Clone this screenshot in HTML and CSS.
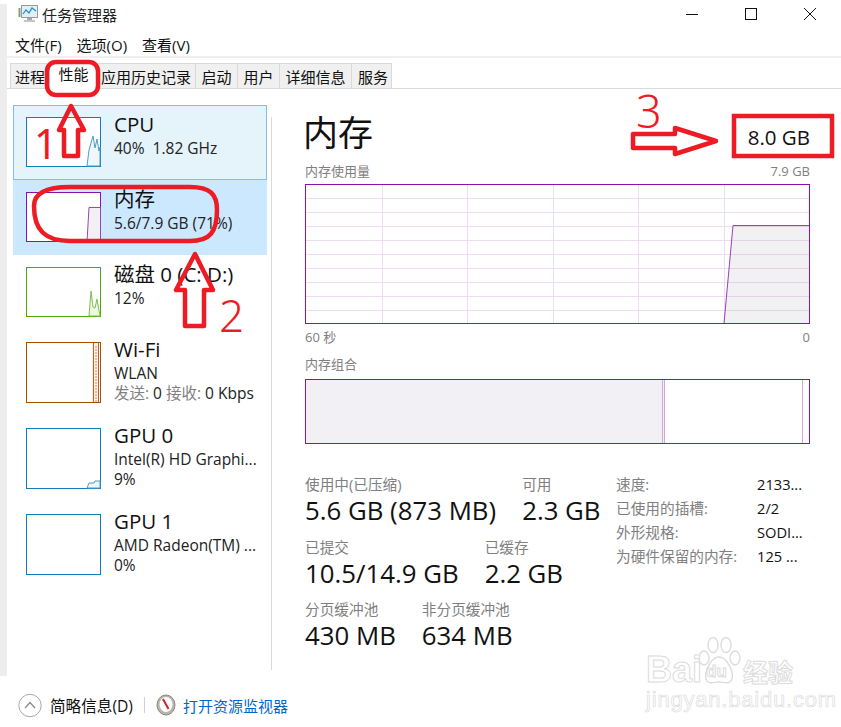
FILE: index.html
```html
<!DOCTYPE html>
<html lang="zh-CN">
<head>
<meta charset="utf-8">
<title>任务管理器</title>
<link rel="stylesheet" href="styles.css">
</head>
<body>
<div class="page">
  <header class="titlebar">
    <svg class="app-icon" width="20" height="18" viewBox="0 0 20 18"><rect x="0.5" y="3" width="2" height="9" fill="#7f9f7f"/><rect x="3.5" y="0.5" width="16" height="12" fill="#dff0fa" stroke="#9a9a9a"/><path d="M5 9 L8 5 L11 8 L14 3 L18 6" fill="none" stroke="#2c8ac9" stroke-width="1.2"/><rect x="9" y="13" width="5" height="2" fill="#a8a8a8"/><rect x="6" y="15" width="11" height="2" fill="#c4c4c4"/></svg>
    <span class="app-title">任务管理器</span>
    <div class="controls">
      <svg width="14" height="14" viewBox="0 0 14 14"><path d="M1 7.5H13" stroke="#111" stroke-width="1"/></svg>
      <svg width="14" height="14" viewBox="0 0 14 14"><rect x="1.5" y="1.5" width="11" height="11" fill="none" stroke="#111"/></svg>
      <svg width="14" height="14" viewBox="0 0 14 14"><path d="M1 1L13 13M13 1L1 13" stroke="#111" stroke-width="1"/></svg>
    </div>
  </header>
  <nav class="menubar"><span>文件(F)</span><span>选项(O)</span><span>查看(V)</span></nav>
  <div class="tabs">
    <span class="tab t1">进程</span><span class="tab active t2">性能</span><span class="tab t3">应用历史记录</span><span class="tab t4">启动</span><span class="tab t4">用户</span><span class="tab t5">详细信息</span><span class="tab t6">服务</span>
  </div>
  <div class="content">
    <aside class="list">
      <div class="item cpu">
        <svg class="thumb" width="75" height="50" viewBox="0 0 75 50"><rect x="0.5" y="0.5" width="74" height="49" fill="#fff" stroke="#117dbb"/><path d="M61 49 L63 33 L65 26 L67 19 L69 31 L71 22 L73 34 L74 30 V49Z" fill="#f0f7fb" stroke="#4f9ccb"/></svg>
        <div class="info"><div class="name">CPU</div><div class="sub">40%&nbsp; 1.82 GHz</div></div>
      </div>
      <div class="item selected">
        <svg class="thumb" width="75" height="50" viewBox="0 0 75 50"><rect x="0.5" y="0.5" width="74" height="49" fill="#fff" stroke="#8b12ae"/><path d="M61 49.5 L63 15.5 H74.5 V49.5Z" fill="#f2f0f4" stroke="#9c44b8"/></svg>
        <div class="info"><div class="name">内存</div><div class="sub">5.6/7.9 GB (71%)</div></div>
      </div>
      <div class="item">
        <svg class="thumb" width="75" height="50" viewBox="0 0 75 50"><rect x="0.5" y="0.5" width="74" height="49" fill="#fff" stroke="#4da60c"/><path d="M63 49 L65 24 L67 40 L69 41 L71 32 L73 44 L74 48 V49Z" fill="#eef7e6" stroke="#7cc04c"/></svg>
        <div class="info"><div class="name">磁盘 0 (C: D:)</div><div class="sub">12%</div></div>
      </div>
      <div class="item tall">
        <svg class="thumb" width="75" height="61" viewBox="0 0 75 61"><rect x="0.5" y="0.5" width="74" height="60" fill="#fff" stroke="#a74f01"/><path d="M66 60 V1 H73 V60Z" fill="#fbeee4"/><path d="M67.5 60 V1 M72.5 60 V1" fill="none" stroke="#b5652a"/><path d="M70 60 V4" fill="none" stroke="#e08a5c" stroke-dasharray="2 1"/></svg>
        <div class="info"><div class="name">Wi-Fi</div><div class="sub">WLAN</div><div class="sub third"><span class="muted">发送:</span> 0 <span class="muted">接收:</span> 0 Kbps</div></div>
      </div>
      <div class="item tall">
        <svg class="thumb" width="75" height="61" viewBox="0 0 75 61"><rect x="0.5" y="0.5" width="74" height="60" fill="#fff" stroke="#117dbb"/><path d="M61 60 L63 55 H68 L69 53 H74 V60Z" fill="#f0f7fb" stroke="#4f9ccb"/></svg>
        <div class="info"><div class="name">GPU 0</div><div class="sub">Intel(R) HD Graphi...</div><div class="sub third">9%</div></div>
      </div>
      <div class="item tall">
        <svg class="thumb" width="75" height="61" viewBox="0 0 75 61"><rect x="0.5" y="0.5" width="74" height="60" fill="#fff" stroke="#117dbb"/></svg>
        <div class="info"><div class="name">GPU 1</div><div class="sub">AMD Radeon(TM) ...</div><div class="sub third">0%</div></div>
      </div>
    </aside>
    <div class="divider"></div>
    <main class="detail">
      <div class="head"><h1>内存</h1><div class="capacity">8.0 GB</div></div>
      <div class="caption"><span>内存使用量</span><span>7.9 GB</span></div>
      <svg class="graph" width="505" height="140" viewBox="0 0 505 140">
        <g stroke="#eedcf3" stroke-width="1">
          <path d="M77.5 0V140M162.5 0V140M248.5 0V140M333.5 0V140M419.5 0V140"/>
          <path d="M0 14.5H505M0 28.5H505M0 42.5H505M0 56.5H505M0 70.5H505M0 84.5H505M0 98.5H505M0 112.5H505M0 126.5H505"/>
        </g>
        <path d="M419 139.5 L428 41.5 H504.5 V139.5Z" fill="#8e8296" fill-opacity=".12" stroke="none"/>
        <path d="M419 139.5 L428 41.5 H504" fill="none" stroke="#9b3fb8"/>
        <rect x="0.5" y="0.5" width="504" height="139" fill="none" stroke="#8b12ae"/>
      </svg>
      <div class="caption axis"><span>60 秒</span><span>0</span></div>
      <div class="caption combo">内存组合</div>
      <div class="composition"><div class="used"></div><div class="sep"></div><div class="free"></div><div class="sep"></div><div class="rest"></div></div>
      <section class="stats">
        <div class="stat-rows">
          <div class="stat-row"><div class="stat"><label>使用中(已压缩)</label><strong>5.6 GB (873 MB)</strong></div><div class="stat"><label>可用</label><strong>2.3 GB</strong></div></div>
          <div class="stat-row"><div class="stat"><label>已提交</label><strong>10.5/14.9 GB</strong></div><div class="stat"><label>已缓存</label><strong>2.2 GB</strong></div></div>
          <div class="stat-row"><div class="stat"><label>分页缓冲池</label><strong>430 MB</strong></div><div class="stat"><label>非分页缓冲池</label><strong>634 MB</strong></div></div>
        </div>
        <dl class="props">
          <dt>速度:</dt><dd>2133...</dd>
          <dt>已使用的插槽:</dt><dd>2/2</dd>
          <dt>外形规格:</dt><dd>SODI...</dd>
          <dt>为硬件保留的内存:</dt><dd>125 ...</dd>
        </dl>
      </section>
    </main>
  </div>
  <footer class="footer">
    <svg width="24" height="25" viewBox="0 0 24 25"><circle cx="12" cy="12.5" r="11.2" fill="#fff" stroke="#a6a6a6"/><path d="M7 15L12 9.5L17 15" fill="none" stroke="#8a8a8a" stroke-width="1.3"/></svg>
    <span class="brief">简略信息(D)</span>
    <span class="vsep"></span>
    <svg width="20" height="22" viewBox="0 0 20 22"><ellipse cx="10" cy="11" rx="9" ry="10" fill="#b9b4ad" stroke="#8b8680"/><ellipse cx="10" cy="10.5" rx="6.5" ry="7.5" fill="#fff"/><path d="M7 5L12.5 15" stroke="#d3202a" stroke-width="2"/></svg>
    <a class="monitor">打开资源监视器</a>
  </footer>

  <div class="edge"></div>
  <div class="watermark" aria-hidden="true">
    <svg class="paw" width="44" height="50" viewBox="0 0 44 50"><g fill="#fff" stroke="#dcdcdc" stroke-width="1.4"><ellipse cx="7" cy="22" rx="5" ry="7"/><ellipse cx="16" cy="9" rx="5" ry="7.5"/><ellipse cx="29" cy="9" rx="5" ry="7.5"/><ellipse cx="38" cy="22" rx="5" ry="7"/><path d="M22 21C30 21 37 36 35 43C33 49 27 46 22 46C17 46 11 49 9 43C7 36 14 21 22 21Z"/></g></svg>
    <span class="wm-bai">Bai</span><span class="wm-du">du</span><span class="wm-jy">经验</span><span class="wm-url">jingyan.baidu.com</span>
  </div>
  <svg class="marks" width="841" height="727" viewBox="0 0 841 727">
    <g fill="none" stroke="#ed1c24" stroke-width="4.5" stroke-linejoin="round">
      <rect x="47" y="62" width="51" height="33" rx="9"/>
      <path d="M71 106L59 130H64V156H78V130H84Z"/>
      <path d="M34 206C34 192 48 187 70 187H190C210 187 217 194 217 210C217 232 210 241 190 241H70C45 241 34 230 34 206Z"/>
      <path d="M195 254L176 290H185V326H204V290H213Z"/>
      <path d="M633 134H675V128L716 141L675 154V148H633Z"/>
      <rect x="734" y="116" width="98" height="40" stroke-linejoin="miter"/>
    </g>
  </svg>
  <span class="num n1">1</span><span class="num n2">2</span><span class="num n3">3</span>
</div>
</body>
</html>
```

FILE: styles.css
```css
* { box-sizing: border-box; }
html, body { margin: 0; padding: 0; background: #fff; }
body { font-family: "Open Sans", "Noto Sans CJK SC", sans-serif; color: #111; }
.page { position: relative; width: 841px; height: 727px; overflow: hidden; }

.titlebar { height: 28px; display: flex; align-items: center; padding-left: 18px; }
.app-icon { margin-right: 4px; }
.app-title { font-size: 15px; color: #222; }
.controls { margin-left: auto; display: flex; gap: 45px; padding-right: 24px; }

.menubar { height: 30px; display: flex; align-items: center; gap: 15px; padding: 5px 0 0 15px; font-size: 15px; border-bottom: 2px solid #f0f0f0; }

.tabs { height: 31px; display: flex; align-items: flex-end; padding-left: 10px; border-bottom: 1px solid #d9d9d9; }
.tab { height: 25px; background: #f0f0f0; border: 1px solid #d9d9d9; border-bottom: 0; border-left: 0; font-size: 15px; line-height: 27px; text-align: center; }
.t1 { width: 40px; border-left: 1px solid #d9d9d9; }
.t2 { width: 47px; }
.t3 { width: 99px; }
.t4 { width: 42px; }
.t5 { width: 72px; }
.t6 { width: 40px; padding-left: 3px; }
.tab.active { background: #fff; border: 0; height: 27px; line-height: 25px; margin-bottom: -1px; position: relative; }

.content { height: 590px; display: flex; align-items: flex-start; padding-left: 13px; }
.list { width: 254px; margin-top: 16px; flex: none; }
.item { display: flex; align-items: flex-start; }
.item.cpu { background: #e5f3fb; outline: 1px solid #7fc0e4; outline-offset: -1px; }
.item.selected { background: #cce8ff; }
.thumb { display: block; margin: 12px 13px 13px 13px; flex: none; }
.info { padding-top: 7px; white-space: nowrap; }
.name { font-size: 20.5px; line-height: 24px; color: #111; }
.sub { font-size: 15.5px; line-height: 22px; margin-top: 1px; color: #222; }
.third { line-height: 21px; margin-top: -1px; }
.muted { color: #808080; }

.divider { width: 1px; height: 553px; background: #d9d9d9; margin: 28px 0 0 4px; flex: none; }

.detail { width: 505px; margin-left: 33px; flex: none; }
.head { height: 73px; padding-top: 22px; display: flex; justify-content: space-between; align-items: flex-start; }
h1 { margin: 0 0 0 -2px; font-size: 35px; font-weight: 400; line-height: 44px; color: #111; }
.capacity { font-size: 20.5px; line-height: 28px; margin-top: 12px; color: #111; }
.caption { display: flex; justify-content: space-between; font-size: 13px; line-height: 18px; color: #808080; height: 18px; margin-top: 0; }
.graph { display: block; margin-top: 4px; }
.axis { margin-top: 4px; }
.combo { margin-top: 9px; }
.composition { margin-top: 6px; height: 65px; display: flex; border: 1px solid #8b12ae; }
.used { width: 356px; background: #f2f0f4; }
.sep { width: 1px; background: #d1a7dd; }
.composition .sep:nth-child(2) { width: 3px; border-right: 1px solid #d1a7dd; border-left: 1px solid #d1a7dd; background: #f2f0f4; }
.free { width: 137px; }
.rest { flex: 1; }

.stats { display: flex; margin-top: 31px; }
.stat-rows { width: 311px; flex: none; }
.stat-row { display: flex; gap: 26px; height: 62.5px; }
.stat label { display: block; font-size: 14.67px; line-height: 18px; color: #808080; }
.stat strong { display: block; font-size: 25.8px; font-weight: 400; line-height: 34px; color: #111; white-space: nowrap; }
.props { margin: 0; display: grid; grid-template-columns: 141px auto; grid-auto-rows: 24px; align-content: start; font-size: 14.67px; line-height: 18px; }
.props dt { color: #808080; white-space: nowrap; }
.props dd { margin: 0; color: #111; white-space: nowrap; }

.footer { height: 48px; padding-top: 4px; display: flex; align-items: center; padding-left: 18px; font-size: 15px; }
.brief { margin-left: 8px; color: #111; font-size: 15.6px; }
.vsep { width: 1px; height: 16px; background: #d0d0d0; margin: 0 11px 0 11px; }
.monitor { margin-left: 7px; color: #0066cc; }

.edge { position: absolute; left: 0; top: 4px; width: 7px; height: 672px; background: #ededed; }

.marks { position: absolute; left: 0; top: 0; pointer-events: none; }
.num { position: absolute; color: #ed1c24; font-family: "Noto Sans", sans-serif; font-weight: 400; line-height: 1; }
.n1 { left: 34px; top: 123px; font-size: 41px; }
.n2 { left: 219px; top: 293px; font-size: 44px; font-weight: 300; }
.n3 { left: 636px; top: 88px; font-size: 45px; font-weight: 300; }

.watermark { position: absolute; left: 640px; top: 636px; width: 200px; height: 80px; font-family: "Liberation Sans", sans-serif; color: #fff; -webkit-text-stroke: 1px #dcdcdc; }
.paw { position: absolute; left: 57px; top: 0; }
.wm-bai, .wm-du, .wm-jy, .wm-url { position: absolute; }
.wm-bai { left: 6px; top: 16px; font-size: 36px; line-height: 36px; font-weight: 700; }
.wm-du { left: 66px; top: 26px; font-size: 17px; line-height: 20px; font-weight: 700; }
.wm-jy { left: 103px; top: 22px; font-size: 25px; line-height: 26px; font-family: "Noto Sans CJK SC", sans-serif; font-weight: 700; }
.wm-url { left: 6px; top: 54px; font-size: 22px; line-height: 20px; letter-spacing: .8px; -webkit-text-stroke: .7px #dcdcdc; }
```
